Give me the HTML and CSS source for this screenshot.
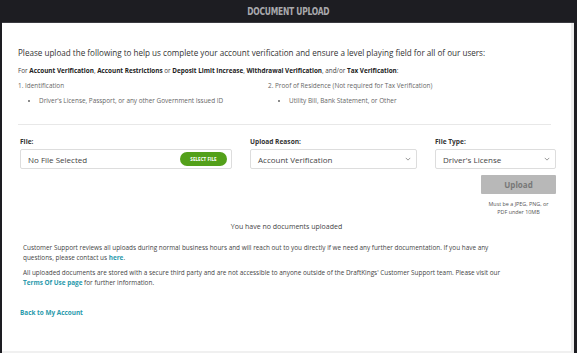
FILE: index.html
```html
<!DOCTYPE html>
<html>
<head>
<meta charset="utf-8">
<link rel="stylesheet" href="styles.css">
</head>
<body>
<div class="frame">
  <div class="header"><h1 class="title">DOCUMENT UPLOAD</h1></div>
  <div class="panel">
    <p class="intro">Please upload the following to help us complete your account verification and ensure a level playing field for all of our users:</p>
    <p class="for">For <b>Account Verification</b>, <b>Account Restrictions</b> or <b>Deposit Limit Increase</b>, <b>Withdrawal Verification</b>, and/or <b>Tax Verification</b>:</p>
    <div class="reqs">
      <div class="req">
        <div class="req-title">1. Identification</div>
        <ul class="req-list"><li>Driver's License, Passport, or any other Government Issued ID</li></ul>
      </div>
      <div class="req">
        <div class="req-title">2. Proof of Residence (Not required for Tax Verification)</div>
        <ul class="req-list"><li>Utility Bill, Bank Statement, or Other</li></ul>
      </div>
    </div>
    <hr class="rule">
    <div class="form">
      <div class="field f-file">
        <label class="lbl">File:</label>
        <div class="box">
          <span class="box-text">No File Selected</span>
          <span class="select-btn">SELECT FILE</span>
        </div>
      </div>
      <div class="field f-reason">
        <label class="lbl">Upload Reason:</label>
        <div class="box">
          <span class="box-text">Account Verification</span>
          <svg class="chev" viewBox="0 0 8 5" width="6" height="4"><path d="M1 1 L4 4 L7 1" fill="none" stroke="#777" stroke-width="1"/></svg>
        </div>
      </div>
      <div class="field f-type">
        <label class="lbl">File Type:</label>
        <div class="box">
          <span class="box-text">Driver's License</span>
          <svg class="chev" viewBox="0 0 8 5" width="6" height="4"><path d="M1 1 L4 4 L7 1" fill="none" stroke="#777" stroke-width="1"/></svg>
        </div>
        <div class="upload-btn">Upload</div>
        <div class="note">Must be a JPEG, PNG, or<br>PDF under 10MB</div>
      </div>
    </div>
    <p class="empty">You have no documents uploaded</p>
    <div class="info">
      <p>Customer Support reviews all uploads during normal business hours and will reach out to you directly if we need any further documentation. If you have any questions, please contact us <a class="link">here</a>.</p>
      <p>All uploaded documents are stored with a secure third party and are not accessible to anyone outside of the DraftKings' Customer Support team. Please visit our <a class="link">Terms Of Use page</a> for further information.</p>
    </div>
    <a class="back link">Back to My Account</a>
  </div>
</div>
</body>
</html>
```
FILE: styles.css
```css
* { box-sizing: border-box; }
html, body { margin: 0; padding: 0; }
body {
  width: 577px;
  height: 353px;
  overflow: hidden;
  background: #1d1d22;
  font-family: "Open Sans", "Noto Sans", sans-serif;
  color: #333;
}
.frame {
  height: 353px;
  margin-left: 2px;
  margin-right: 3px;
  display: flex;
  flex-direction: column;
}
.header {
  height: 23px;
  display: flex;
  align-items: center;
  justify-content: center;
  background: #1d1d22;
  border-bottom: 1px solid #3a3a40;
}
.title {
  margin: 0;
  display: inline-block;
  font-family: "DejaVu Sans Condensed", "DejaVu Sans", sans-serif;
  font-stretch: condensed;
  font-weight: bold;
  font-size: 10.5px;
  letter-spacing: -0.3px;
  line-height: 14px;
  color: #a9a9ad;
  transform: scaleX(0.8);
}
.panel {
  flex: 1;
  background: #fff;
  border-right: 3px solid #ececec;
  border-bottom: 2px solid #f0f0f0;
  padding: 24px 16px 0 16px;
}
.intro {
  margin: 0 0 7px 0;
  font-size: 8.1px;
  line-height: 12px;
  color: #333;
}
.for {
  margin: 0 0 5px 0;
  font-size: 6.35px;
  line-height: 10px;
  color: #444;
}
.for b { color: #222; }
.reqs {
  display: grid;
  grid-template-columns: 250px 1fr;
  font-size: 6.4px;
  line-height: 10px;
  color: #666;
}
.req-title { margin-bottom: 5px; }
.req-list {
  margin: 0;
  padding-left: 21px;
}
.req-list li { list-style: disc; }
.rule {
  margin: 18px 4px 0 0;
  border: 0;
  border-top: 1px solid #e8e8e8;
}
.form {
  margin-top: 12px;
  padding-left: 2px;
  display: grid;
  grid-template-columns: 212px 167px 121px;
  column-gap: 18px;
  align-items: start;
}
.field { display: flex; flex-direction: column; }
.lbl {
  font-size: 6.6px;
  line-height: 9px;
  font-weight: bold;
  color: #333;
  margin-bottom: 3px;
}
.box {
  height: 20px;
  border: 1px solid #ddd;
  border-radius: 2px;
  display: flex;
  align-items: center;
  justify-content: space-between;
  padding: 0 4px 0 7px;
  background: #fff;
}
.box-text { font-size: 8px; color: #444; }
.select-btn {
  background: #53a01a;
  color: #fff;
  font-size: 4.6px;
  font-weight: bold;
  border-radius: 7px;
  height: 14px;
  width: 47px;
  display: flex;
  align-items: center;
  justify-content: center;
}
.chev { margin-right: 1px; }
.upload-btn {
  margin-top: 6px;
  margin-left: 46px;
  height: 19px;
  background: #b8b8b8;
  border-radius: 1px;
  color: #777;
  font-size: 8px;
  font-weight: bold;
  display: flex;
  align-items: center;
  justify-content: center;
}
.note {
  margin-top: 7px;
  margin-left: 46px;
  text-align: center;
  font-size: 5.4px;
  line-height: 7.5px;
  color: #555;
}
.empty {
  margin: 6px 0 0 0;
  text-align: center;
  font-size: 7px;
  line-height: 10px;
  color: #444;
}
.info {
  margin-top: 11px;
  padding-left: 5px;
  max-width: 490px;
  font-size: 6.4px;
  line-height: 10px;
  color: #444;
}
.info p { margin: 0 0 5px 0; }
.link {
  color: #2a9aac;
  font-weight: bold;
  text-decoration: none;
}
.back {
  display: block;
  margin-top: 20px;
  margin-left: 2px;
  font-size: 6.4px;
  line-height: 10px;
}
```
